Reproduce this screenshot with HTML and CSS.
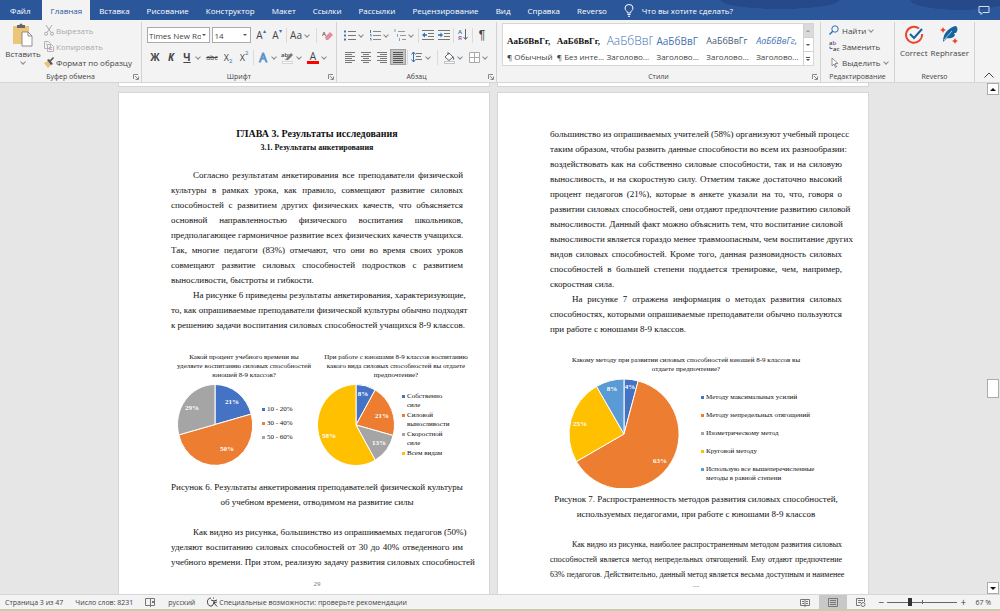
FILE: index.html
```html
<!DOCTYPE html>
<html lang="ru">
<head>
  <meta charset="UTF-8">
  <meta name="viewport" content="width=device-width, initial-scale=1.0">
  <title>Документ</title>
  <link rel="stylesheet" href="styles.css">
</head>
<body>
  <header class="tabs">
    <button class="tab file">Файл</button>
    <button class="tab active">Главная</button>
    <button class="tab">Вставка</button>
    <button class="tab">Рисование</button>
    <button class="tab">Конструктор</button>
    <button class="tab">Макет</button>
    <button class="tab">Ссылки</button>
    <button class="tab">Рассылки</button>
    <button class="tab">Рецензирование</button>
    <button class="tab">Вид</button>
    <button class="tab">Справка</button>
    <button class="tab">Reverso</button>
    <button class="tab tell-me">
      <svg width="10" height="13" viewBox="0 0 10 13" fill="none" stroke="#fff"><path d="M3.5 9C3.5 7 1 6.500 1 4a4 3.500 0 0 1 8 0c0 2.500-2.500 3-2.500 5zM3.500 10.500h3M4 12.300h2"/></svg>
      Что вы хотите сделать?
    </button>
    <button class="comment" aria-label="Примечания">
      <svg width="12" height="11" viewBox="0 0 12 11" fill="none" stroke="#d5dff0"><path d="M1 1.500h10v6H5L3 9.500v-2H1z"/></svg>
    </button>
  </header>

  <section class="ribbon">
    <div class="group clipboard">
      <div class="group-body">
        <button class="big-button paste">
          <svg width="22" height="24" viewBox="0 0 22 24"><rect x="1" y="3" width="16" height="18" fill="#ecc57c"/><path d="M5 5V2h2.500a1.500 1.500 0 0 1 3 0H13v3z" fill="#666"/><path d="M10 9h6l4 4v10H10z" fill="#fff" stroke="#777" stroke-width=".8"/><path d="M16 9v4h4" fill="none" stroke="#777" stroke-width=".8"/></svg>
          <span>Вставить</span>
          <i class="caret"></i>
        </button>
        <div class="stack">
          <button class="line-button disabled">
            <svg width="10" height="11" viewBox="0 0 10 11" fill="none" stroke="#aaa"><path d="M2 0l5 7.500M8 0L3 7.500"/><circle cx="2" cy="8.700" r="1.500"/><circle cx="8" cy="8.700" r="1.500"/></svg>
            Вырезать
          </button>
          <button class="line-button disabled">
            <svg width="10" height="11" viewBox="0 0 10 11" fill="#f3f3f3" stroke="#b9aeb9"><path d="M.500.500h4l2 2v5h-6zM3.500 3.500h4l2 2v5h-6zM5 6.500h3M5 8.500h3M2 3h1"/></svg>
            Копировать
          </button>
          <button class="line-button">
            <svg width="10" height="11" viewBox="0 0 10 11"><path d="M0 6l4-2 3 4-3 3z" fill="#ecc06f"/><path d="M3 3l2-1 4 5-2 1zM6 3l3-3 1 1-3 3.500z" fill="#555"/></svg>
            Формат по образцу
          </button>
        </div>
      </div>
      <div class="group-label">Буфер обмена<svg class="launcher" width="6" height="6" viewBox="0 0 6 6"><path d="M.5 5V.5H5M2 2l3 3M5.500 2.500v3h-3"/></svg></div>
    </div>

    <div class="group font">
      <div class="group-body rows">
        <div class="row">
          <label class="combo font-name"><select aria-label="Шрифт"><option>Times New Roman</option></select></label>
          <label class="combo font-size"><select aria-label="Размер шрифта"><option>14</option></select></label>
          <button class="tool grow">A<sup>▴</sup></button>
          <button class="tool shrink">A<sup>▾</sup></button>
          <i class="sep"></i>
          <button class="tool case">Aa</button><i class="caret"></i>
          <i class="sep wide"></i>
          <button class="tool" aria-label="Очистить формат"><svg width="12" height="12" viewBox="0 0 12 12"><text x="0" y="7" class="icon-text" fill="#555">A</text><path d="M3 8l5-5 3 3-5 5H4z" fill="#e78a9b"/></svg></button>
        </div>
        <div class="row">
          <button class="tool bold">Ж</button>
          <button class="tool bold italic">К</button>
          <button class="tool bold underline">Ч</button><i class="caret"></i>
          <button class="tool strike">abc</button>
          <button class="tool script">X<sub>2</sub></button>
          <button class="tool script">X<sup>2</sup></button>
          <i class="sep"></i>
          <button class="tool outline-letter">A</button><i class="caret"></i>
          <button class="tool" aria-label="Цвет выделения"><svg width="14" height="13" viewBox="0 0 14 13"><text x="0" y="6" class="icon-text" fill="#444">aby</text><path d="M5 8l5-6 2 2-5 5H4z" fill="#777"/><path d="M1.500 10.500h10v2h-10z" fill="#fff" stroke="#bbb" stroke-width=".6"/></svg></button><i class="caret"></i>
          <button class="tool font-color">A</button><i class="caret"></i>
        </div>
      </div>
      <div class="group-label">Шрифт<svg class="launcher" width="6" height="6" viewBox="0 0 6 6"><path d="M.5 5V.5H5M2 2l3 3M5.500 2.500v3h-3"/></svg></div>
    </div>

    <div class="group paragraph">
      <div class="group-body rows">
        <div class="row">
          <button class="tool" aria-label="Маркеры"><svg width="12" height="12" viewBox="0 0 12 12"><path d="M4 2.500h8M4 6.500h8M4 10.500h8" stroke="#777"/><path d="M0 1.500h2v2H0zM0 5.500h2v2H0zM0 9.500h2v2H0z" fill="#3c78b8"/></svg></button><i class="caret"></i>
          <button class="tool" aria-label="Нумерация"><svg width="12" height="12" viewBox="0 0 12 12"><path d="M4 2.500h8M4 6.500h8M4 10.500h8" stroke="#888"/><path d="M1.500 1v3M1 5.500h1v2M1 9.500h1v2" stroke="#3c78b8" fill="none"/></svg></button><i class="caret"></i>
          <button class="tool" aria-label="Многоуровневый список"><svg width="12" height="12" viewBox="0 0 12 12"><path d="M4 2.500h7M6 6.500h6M8 10.500h4" stroke="#999"/><path d="M1 0v3M3.500 5v3M5.500 9v3" stroke="#7ba3cf"/></svg></button><i class="caret"></i>
          <i class="sep"></i>
          <button class="tool" aria-label="Уменьшить отступ"><svg width="12" height="12" viewBox="0 0 12 12"><path d="M0 1.500h12M6 4.500h6M6 7.500h6M0 10.500h12" stroke="#777"/><path d="M0 6l3-2.500v1.800h2v1.500H3v1.700z" fill="#2f71b5"/></svg></button>
          <button class="tool" aria-label="Увеличить отступ"><svg width="12" height="12" viewBox="0 0 12 12"><path d="M0 1.500h12M6 4.500h6M6 7.500h6M0 10.500h12" stroke="#777"/><path d="M5 6L2.500 3.500v1.800H0v1.500h2.500v1.700z" fill="#2f71b5"/></svg></button>
          <i class="sep"></i>
          <button class="tool" aria-label="Сортировка"><svg width="12" height="14" viewBox="0 0 12 14"><text x="1" y="6" class="icon-text" fill="#2f71b5">А</text><text x="1" y="12" class="icon-text" fill="#8b4a9c">Я</text><path d="M8.500 1v10M6.500 9l2 2.500 2-2.500" stroke="#666" fill="none"/></svg></button>
          <i class="sep"></i>
          <button class="tool pilcrow">¶</button>
        </div>
        <div class="row">
          <button class="tool" aria-label="По левому краю"><svg width="10" height="12" viewBox="0 0 10 12" stroke="#777"><path d="M0 1.500h10M0 3.500h7M0 5.500h10M0 7.500h7M0 9.500h10M0 11.500h7"/></svg></button>
          <button class="tool" aria-label="По центру"><svg width="10" height="12" viewBox="0 0 10 12" stroke="#777"><path d="M0 1.500h10M2 3.500h6M0 5.500h10M2 7.500h6M0 9.500h10M2 11.500h6"/></svg></button>
          <button class="tool" aria-label="По правому краю"><svg width="10" height="12" viewBox="0 0 10 12" stroke="#777"><path d="M0 1.500h10M3 3.500h7M0 5.500h10M3 7.500h7M0 9.500h10M3 11.500h7"/></svg></button>
          <button class="tool selected" aria-label="По ширине"><svg width="10" height="12" viewBox="0 0 10 12" stroke="#555"><path d="M0 1.500h10M0 3.500h10M0 5.500h10M0 7.500h10M0 9.500h10M0 11.500h10"/></svg></button>
          <i class="sep"></i>
          <button class="tool" aria-label="Интервал"><svg width="12" height="12" viewBox="0 0 12 12"><path d="M5 2.500h6M5 5.500h5M5 8.500h6" stroke="#777"/><path d="M2.500 1v10M.500 3.500l2-2.500 2 2.500M.500 8.500l2 2.500 2-2.500" stroke="#2f71b5" fill="none"/></svg></button><i class="caret"></i>
          <i class="sep wide"></i>
          <button class="tool" aria-label="Заливка"><svg width="13" height="13" viewBox="0 0 13 13"><path d="M2 6l4-4 4 4-4 3.500zM5 4V1" fill="#fff" stroke="#666"/><path d="M10 5q2 2.500 1 4-1.500 0-1-4z" fill="#2f71b5"/><path d="M1.500 10.500h10v2h-10z" fill="#fff" stroke="#aaa" stroke-width=".7"/></svg></button><i class="caret"></i>
          <button class="tool" aria-label="Границы"><svg width="11" height="11" viewBox="0 0 11 11" fill="#fff" stroke="#aaa"><path d="M.500.500h10v10H.500zM5.500.500v10M.500 5.500h10"/></svg></button><i class="caret"></i>
        </div>
      </div>
      <div class="group-label">Абзац<svg class="launcher" width="6" height="6" viewBox="0 0 6 6"><path d="M.5 5V.5H5M2 2l3 3M5.500 2.500v3h-3"/></svg></div>
    </div>

    <div class="group styles">
      <div class="group-body">
        <div class="gallery">
          <button class="style"><b class="sample normal">АаБбВвГг,</b><span>¶ Обычный</span></button>
          <button class="style"><b class="sample normal">АаБбВвГг,</b><span>¶ Без инте...</span></button>
          <button class="style"><b class="sample h1">АаБбВвГ</b><span>Заголово...</span></button>
          <button class="style"><b class="sample h2">АаБбВвГ</b><span>Заголово...</span></button>
          <button class="style"><b class="sample h3">АаБбВвГг</b><span>Заголово...</span></button>
          <button class="style"><b class="sample h4">АаБбВвГг,</b><span>Заголово...</span></button>
          <div class="gallery-nav">
            <button class="off" aria-label="Вверх"><i class="arrow up"></i></button>
            <button aria-label="Вниз"><i class="arrow"></i></button>
            <button class="more" aria-label="Ещё"><i class="arrow"></i></button>
          </div>
        </div>
      </div>
      <div class="group-label">Стили<svg class="launcher" width="6" height="6" viewBox="0 0 6 6"><path d="M.5 5V.5H5M2 2l3 3M5.500 2.500v3h-3"/></svg></div>
    </div>

    <div class="group editing">
      <div class="group-body">
        <div class="stack">
          <button class="line-button">
            <svg width="11" height="11" viewBox="0 0 11 11" fill="none" stroke="#2f71b5"><circle cx="6" cy="4" r="3.200"/><path d="M3.700 6.300L.500 9.500" stroke-width="1.500"/></svg>
            Найти <i class="caret"></i>
          </button>
          <button class="line-button">
            <svg width="11" height="12" viewBox="0 0 11 12"><text x="0" y="5" class="icon-text" fill="#444">a<tspan fill="#8b4a9c">b</tspan></text><text x="4" y="11" class="icon-text" fill="#444">ac</text><path d="M1 6.500v2h2.500" fill="none" stroke="#2f71b5"/></svg>
            Заменить
          </button>
          <button class="line-button">
            <svg width="11" height="11" viewBox="0 0 11 11" fill="#fff" stroke="#777"><path d="M3 1v8l2-2 1.500 3.500 1-.500L6 6.500h3z" stroke-width=".8"/></svg>
            Выделить <i class="caret"></i>
          </button>
        </div>
      </div>
      <div class="group-label">Редактирование</div>
    </div>

    <div class="group reverso">
      <div class="group-body">
        <button class="big-button">
          <svg width="20" height="20" viewBox="0 0 20 20" fill="none" stroke-width="2"><path d="M15 3.500A8 8 0 1 0 18 9" stroke="#e8452c"/><path d="M6 9l4 4 8-9" stroke="#17639f"/></svg>
          <span>Correct</span>
        </button>
        <button class="big-button">
          <svg width="20" height="20" viewBox="0 0 20 20"><path d="M3 17Q3 9 8 5t8-4Q19 4 16 8h-2l1 2q-2 4-8 3z" fill="#17639f"/><path d="M4 15l8-9" stroke="#f3f3f3" stroke-width=".7"/><path d="M3 2l1 2 2 1-2 1-1 2-1-2-2-1 2-1zM15 13l1 2 2 1-2 1-1 2-1-2-2-1 2-1z" fill="#e8452c"/></svg>
          <span>Rephraser</span>
        </button>
      </div>
      <div class="group-label">Reverso</div>
    </div>
    <button class="collapse" aria-label="Свернуть ленту"><svg width="10" height="6" viewBox="0 0 10 6" fill="none" stroke="#444"><path d="M.500 5.500L5 1l4.500 4.500"/></svg></button>
  </section>

  <main class="workspace">
    <div class="canvas">
      <div class="previous-page"></div>
      <div class="previous-page"></div>

      <article class="page first">
        <h1>ГЛАВА 3. Результаты исследования</h1>
        <h2>3.1. Результаты анкетирования</h2>
        <p class="text">
          <span>Согласно результатам анкетирования все преподаватели физической</span>
          <span>культуры в рамках урока, как правило, совмещают развитие силовых</span>
          <span>способностей с развитием других физических качеств, что объясняется</span>
          <span>основной направленностью физического воспитания школьников,</span>
          <span>предполагающее гармоничное развитие всех физических качеств учащихся.</span>
          <span>Так, многие педагоги (83%) отмечают, что они во время своих уроков</span>
          <span>совмещают развитие силовых способностей подростков с развитием</span>
          <span>выносливости, быстроты и гибкости.</span>
        </p>
        <p class="text">
          <span>На рисунке 6 приведены результаты анкетирования, характеризующие,</span>
          <span>то, как опрашиваемые преподаватели физической культуры обычно подходят</span>
          <span>к решению задачи воспитания силовых способностей учащихся 8-9 классов.</span>
        </p>

        <div class="charts">
          <figure class="chart time">
            <figcaption>Какой процент учебного времени вы<br>уделяете воспитанию силовых способностей<br>юношей 8-9 классов?</figcaption>
            <div class="plot">
              <svg class="pie" width="76" height="81" viewBox="0 0 76 81">
                <path d="M38 40.500V.500A37.500 40 0 0 1 74.200 30.100z" fill="#4472c4"/>
                <path d="M38 40.500L74.200 30.100A37.500 40 0 1 1 1.800 50.900z" fill="#ed7d31"/>
                <path d="M38 40.500L1.800 50.900A37.500 40 0 0 1 38 .500z" fill="#a5a5a5"/>
                <text x="55" y="20">21%</text>
                <text x="15" y="26">29%</text>
                <text x="50" y="67">50%</text>
              </svg>
              <ul class="legend">
                <li class="blue">10 - 20%</li>
                <li class="orange">30 - 40%</li>
                <li class="gray">50 - 60%</li>
              </ul>
            </div>
          </figure>
          <figure class="chart kind">
            <figcaption>При работе с юношами 8-9 классов воспитанию<br>какого вида силовых способностей вы отдаете<br>предпочтение?</figcaption>
            <div class="plot">
              <svg class="pie" width="78" height="82" viewBox="0 0 78 82">
                <path d="M39 41V.500A38.500 40.500 0 0 1 58.200 5.900z" fill="#4472c4"/>
                <path d="M39 41L58.200 5.900A38.500 40.500 0 0 1 76.200 51.500z" fill="#ed7d31"/>
                <path d="M39 41L76.200 51.500A38.500 40.500 0 0 1 58.200 76.100z" fill="#a5a5a5"/>
                <path d="M39 41L58.200 76.100A38.500 40.500 0 1 1 39 .500z" fill="#ffc000"/>
                <text x="46" y="12">8%</text>
                <text x="65" y="34">21%</text>
                <text x="62" y="61">13%</text>
                <text x="12" y="54">58%</text>
              </svg>
              <ul class="legend">
                <li class="blue">Собственно<br>силе</li>
                <li class="orange">Силовой<br>выносливости</li>
                <li class="gray">Скоростной<br>силе</li>
                <li class="yellow">Всем видам</li>
              </ul>
            </div>
          </figure>
        </div>

        <p class="caption">Рисунок 6. Результаты анкетирования преподавателей физической культуры<br>об учебном времени, отводимом на развитие силы</p>
        <p class="text cut">
          <span>Как видно из рисунка, большинство из опрашиваемых педагогов (50%)</span>
          <span>уделяют воспитанию силовых способностей от 30 до 40% отведенного им</span>
          <span>учебного времени. При этом, реализую задачу развития силовых способностей</span>
        </p>
        <div class="page-number">29</div>
      </article>

      <article class="page second">
        <p class="text continued">
          <span>большинство из опрашиваемых учителей (58%) организуют учебный процесс</span>
          <span>таким образом, чтобы развить данные способности во всем их разнообразии:</span>
          <span>воздействовать как на собственно силовые способности, так и на силовую</span>
          <span>выносливость, и на скоростную силу. Отметим также достаточно высокий</span>
          <span>процент педагогов (21%), которые в анкете указали на то, что, говоря о</span>
          <span>развитии силовых способностей, они отдают предпочтение развитию силовой</span>
          <span>выносливости. Данный факт можно объяснить тем, что воспитание силовой</span>
          <span>выносливости является гораздо менее травмоопасным, чем воспитание других</span>
          <span>видов силовых способностей. Кроме того, данная разновидность силовых</span>
          <span>способностей в большей степени поддается тренировке, чем, например,</span>
          <span>скоростная сила.</span>
        </p>
        <p class="text">
          <span>На рисунке 7 отражена информация о методах развития силовых</span>
          <span>способностях, которыми опрашиваемые преподаватели обычно пользуются</span>
          <span>при работе с юношами 8-9 классов.</span>
        </p>

        <figure class="chart methods">
          <figcaption>Какому методу при развитии силовых способностей юношей 8-9 классов вы<br>отдаете предпочтение?</figcaption>
          <div class="plot">
            <svg class="pie" width="112" height="110" viewBox="0 0 112 110">
              <path d="M56 56V1A55 55 0 0 1 70.200 2.900z" fill="#4472c4"/>
              <path d="M56 56L70.200 2.900A55 55 0 1 1 8.400 83.500z" fill="#ed7d31"/>
              <path d="M56 56L8.400 83.500A55 55 0 0 1 28.500 8.400z" fill="#ffc000"/>
              <path d="M56 56L28.500 8.400A55 55 0 0 1 56 1z" fill="#5b9bd5"/>
              <text x="62" y="11">4%</text>
              <text x="44" y="13">8%</text>
              <text x="12" y="48">25%</text>
              <text x="92" y="85">63%</text>
            </svg>
            <ul class="legend">
              <li class="blue">Методу максимальных усилий</li>
              <li class="orange">Методу непредельных отягощений</li>
              <li class="gray">Изометрическому метод</li>
              <li class="yellow">Круговой методу</li>
              <li class="sky">Использую все вышеперечисленные<br>методы в равной степени</li>
            </ul>
          </div>
        </figure>

        <p class="caption">Рисунок 7. Распространенность методов развития силовых способностей,<br>используемых педагогами, при работе с юношами 8-9 классов</p>
        <p class="text cut dense">
          <span>Как видно из рисунка, наиболее распространенным методом развития силовых</span>
          <span>способностей является метод непредельных отягощений. Ему отдают предпочтение</span>
          <span>63% педагогов. Действительно, данный метод является весьма доступным и наименее</span>
        </p>
        <div class="page-number clipped">30</div>
      </article>
    </div>
    <div class="scrollbar">
      <button aria-label="Вверх"><i class="arrow up"></i></button>
      <div class="track"><div class="thumb"></div></div>
      <button aria-label="Вниз"><i class="arrow"></i></button>
    </div>
  </main>

  <footer class="status">
    <span>Страница 3 из 47</span>
    <span>Число слов: 8231</span>
    <svg width="11" height="9" viewBox="0 0 11 9" fill="none" stroke="#777"><path d="M.500.500h5v7h-5zM5.500.500h4v7h-4M5.500 0v9M7 3l2 2M9 3L7 5"/></svg>
    <span>русский</span>
    <span class="access"><svg width="11" height="10" viewBox="0 0 11 10" fill="none" stroke="#444"><path d="M4 1A4 4 0 0 0 5 9M6 1l1 0"/><path d="M4 3l3 1 3-1M7 4v2L5 9M7 6l3 3.500M6 6l4-1"/></svg>Специальные возможности: проверьте рекомендации</span>
    <div class="status-right">
      <button class="view" aria-label="Режим чтения"><svg width="10" height="9" viewBox="0 0 10 9" fill="none" stroke="#777"><path d="M.500 1.500h9v6h-9zM5 1v8M2 3.500h2M2 5.500h2M6 3.500h2M6 5.500h2"/></svg></button>
      <button class="view current" aria-label="Разметка страницы"><svg width="10" height="9" viewBox="0 0 10 9" fill="none" stroke="#777"><path d="M.500.500h9v8h-9zM2 2.500h6M2 4.500h6M2 6.500h6"/></svg></button>
      <button class="view" aria-label="Веб-документ"><svg width="10" height="9" viewBox="0 0 10 9" fill="none" stroke="#777"><path d="M4 7.500H.500v-7h8V4M2 2.500h5M2 4.500h3"/><circle cx="7" cy="6.500" r="2"/></svg></button>
      <button class="zoom-step">−</button>
      <input class="zoom" type="range" min="0" max="100" value="31" aria-label="Масштаб">
      <button class="zoom-step">+</button>
      <span class="percent">67 %</span>
    </div>
  </footer>
</body>
</html>
```
FILE: styles.css
```css
* {
  box-sizing: border-box;
}
body {
  margin: 0;
  height: 100vh;
  display: flex;
  flex-direction: column;
  overflow: hidden;
  background: #e6e6e6;
  color: #444;
  font-family: "Open Sans", "Noto Sans", sans-serif;
  font-size: 8px;
}
button {
  padding: 0;
  border: 0;
  background: none;
  color: inherit;
  font: inherit;
  white-space: nowrap;
}
svg {
  display: block;
  flex: none;
}
.icon-text {
  font-size: 6px;
  font-weight: 600;
}

/* tabs */
.tabs {
  flex: none;
  display: flex;
  gap: 1px;
  height: 20px;
  color: #fff;
  background:
    radial-gradient(ellipse 60px 9px at 78% 0, #26498a 98%, transparent),
    radial-gradient(ellipse 50px 10px at 96% 0, #26498a 98%, transparent),
    #2b579a;
}
.tab {
  padding: 0 8px;
}
.tab.file {
  padding: 0 11px 0 10px;
}
.tab.active {
  background: #f3f3f3;
  color: #2b579a;
}
.tell-me {
  display: flex;
  align-items: center;
  gap: 8px;
}
.comment {
  margin-left: auto;
  padding-right: 10px;
}

/* ribbon */
.ribbon {
  flex: none;
  display: flex;
  height: 63px;
  background: #f3f3f3;
  border-bottom: 1px solid #d6d6d6;
}
.group {
  flex: none;
  display: flex;
  flex-direction: column;
  margin-top: 2px;
  border-right: 1px solid #d2d2d2;
}
.group-body {
  flex: 1;
  display: flex;
  min-width: 0;
}
.group-label {
  position: relative;
  height: 10px;
  line-height: 9px;
  text-align: center;
  font-size: 7px;
}
.launcher {
  position: absolute;
  right: 2px;
  top: 2px;
  fill: none;
  stroke: #888;
}
.clipboard {
  width: 142px;
}
.font {
  width: 195px;
}
.paragraph {
  width: 160px;
}
.group.styles {
  flex: 1;
  min-width: 0;
}
.editing {
  width: 74px;
}
.reverso {
  width: 80px;
}
.caret {
  flex: none;
  display: inline-block;
  width: 6px;
  height: 5px;
}
.caret::before {
  content: "";
  display: block;
  width: 3px;
  height: 3px;
  margin: 0 1px;
  border-right: 1px solid #888;
  border-bottom: 1px solid #888;
  transform: rotate(45deg);
}
.big-button {
  display: flex;
  flex-direction: column;
  align-items: center;
  gap: 3px;
  padding-top: 3px;
  line-height: 11px;
}
.paste {
  width: 42px;
  margin-left: 2px;
  padding-top: 1px;
  gap: 1px;
}
.stack {
  display: flex;
  flex-direction: column;
}
.line-button {
  display: flex;
  align-items: center;
  gap: 2px;
  height: 16px;
}
.disabled {
  color: #aaa;
}

.rows {
  flex-direction: column;
  gap: 6px;
  padding: 5px 0 0 5px;
}
.row {
  display: flex;
  align-items: center;
  height: 16px;
}
.tool {
  flex: none;
  display: flex;
  justify-content: center;
  align-items: center;
  width: 16px;
  height: 16px;
  font-size: 10px;
}
.row .caret {
  margin-right: 3px;
}
.sep {
  width: 1px;
  height: 15px;
  margin: 0 1px;
  background: #dadada;
}
.sep.wide {
  margin: 0 3px;
}
.combo {
  position: relative;
  height: 16px;
  margin-right: 2px;
  background: #fff;
  border: 1px solid #ababab;
}
.combo select {
  display: block;
  width: 100%;
  height: 14px;
  padding: 0 8px 0 1px;
  border: 0;
  background: none;
  appearance: none;
  color: #444;
  font: inherit;
}
.combo::after {
  content: "";
  position: absolute;
  right: 3px;
  top: 6px;
  border: 2px solid transparent;
  border-top-color: #555;
}
.font-name {
  width: 64px;
}
.font-size {
  width: 39px;
}
.tool sup,
.tool sub {
  align-self: flex-start;
  color: #2f71b5;
  font-size: 6px;
  line-height: 8px;
}
.tool sub {
  align-self: flex-end;
}
.bold {
  font-weight: 700;
}
.italic {
  font-style: italic;
}
.underline {
  text-decoration: underline;
}
.strike {
  font-size: 7px;
  text-decoration: line-through;
}
.script {
  font-size: 9px;
}
.outline-letter {
  color: #fff;
  font-size: 12px;
  -webkit-text-stroke: 1px #5b93cf;
}
.font-color {
  border-bottom: 3px solid #f00;
  width: 12px;
  height: 13px;
  margin: 0 2px;
}
.pilcrow {
  font-family: "Liberation Sans", sans-serif;
  font-size: 12px;
}
.selected {
  background: #c5c5c5;
  border: 1px solid #a0a0a0;
}

.gallery {
  flex: 1;
  min-width: 0;
  display: flex;
  height: 43px;
  margin: 1px 6px 0 5px;
  padding-left: 1px;
  background: #fff;
  border: 1px solid #d6d6d6;
}
.style {
  flex: 1;
  min-width: 0;
  overflow: hidden;
  padding: 5px 0 0 3px;
  text-align: left;
}
.style span,
.sample {
  display: block;
}
.style span {
  line-height: 12px;
}
.sample {
  height: 20px;
  line-height: 20px;
  font-weight: 400;
}
.sample.normal {
  color: #111;
  font: bold 9px/20px "Liberation Serif", serif;
}
.sample.h1 {
  color: #4472b4;
  font-size: 12px;
  font-weight: 300;
}
.sample.h2 {
  color: #4472b4;
  font-size: 10px;
}
.sample.h3 {
  color: #44597a;
  font-size: 9px;
}
.sample.h4 {
  color: #4472b4;
  font-size: 9px;
  font-style: italic;
}
.gallery-nav {
  flex: none;
  width: 10px;
  display: flex;
  flex-direction: column;
}
.gallery-nav button {
  flex: 1;
  display: flex;
  justify-content: center;
  align-items: center;
  border-left: 1px solid #d0d0d0;
  border-bottom: 1px solid #d0d0d0;
}
.gallery-nav .off {
  background: #dadada;
}
.gallery-nav .more {
  flex-direction: column;
  gap: 1px;
  border-bottom: 0;
}
.more::before {
  content: "";
  width: 4px;
  height: 1px;
  background: #555;
}
.arrow {
  width: 0;
  border: 2px solid transparent;
  border-top-color: #555;
  border-bottom: 0;
}
.arrow.up {
  border-top: 0;
  border-bottom: 2px solid #999;
}
.editing .stack {
  padding-left: 8px;
}
.reverso .group-body {
  justify-content: center;
  gap: 3px;
}
.reverso .big-button {
  gap: 2px;
}
.collapse {
  padding: 47px 6px 0 9px;
}

/* document */
.workspace {
  flex: 1;
  min-height: 0;
  display: flex;
}
.canvas {
  flex: 1;
  display: grid;
  grid-template-columns: 370px 370px;
  grid-template-rows: 3px 1fr;
  gap: 7px 9px;
  justify-content: center;
  overflow: hidden;
}
.previous-page,
.page {
  background: #fff;
  box-shadow: 0 0 0 1px #d6d6d6;
}
.page {
  padding: 34px 26px 0 52px;
  color: #111;
  font-family: "Liberation Serif", "Times New Roman", serif;
  font-size: 9px;
  line-height: 15px;
}
.page h1,
.page h2 {
  margin: 0;
  text-align: center;
  font-size: 10px;
  line-height: 14px;
}
.page h2 {
  margin-bottom: 13px;
  font-size: 8px;
}
.page p {
  margin: 0;
}
.text span {
  display: block;
  white-space: nowrap;
  text-align-last: justify;
}
.text span:first-child {
  padding-left: 22px;
}
.text.continued span:first-child {
  padding-left: 0;
}
.text:not(.cut) span:last-child {
  text-align-last: left;
}
.caption {
  text-align: center;
  white-space: nowrap;
}
.page .cut {
  margin-top: 15px;
}
.dense {
  font-size: 8px;
}
.page-number {
  margin-top: 9px;
  height: 10px;
  line-height: 10px;
  text-align: center;
  font-size: 7px;
  color: #777;
}
.page-number.clipped {
  margin-top: 1px;
  height: 4px;
  overflow: hidden;
}

/* charts */
.charts {
  display: flex;
  margin: 20px -12px 14px 0;
}
.chart {
  margin: 0;
  font-size: 7px;
  line-height: 9px;
}
.chart figcaption {
  text-align: center;
  white-space: nowrap;
}
.plot {
  display: flex;
  align-items: center;
  margin-top: 4px;
}
.time {
  width: 146px;
}
.time .plot {
  padding-left: 6px;
}
.kind {
  flex: 1;
}
.page .methods {
  width: 272px;
  margin: 19px 0 4px;
}
.methods .plot {
  padding-left: 18px;
}
.pie path {
  stroke: #fff;
  stroke-linejoin: round;
}
.pie text {
  fill: #fff;
  font-weight: 700;
  text-anchor: middle;
}
.legend {
  display: flex;
  flex-direction: column;
  gap: 1px;
  margin: 0 0 0 7px;
  padding: 0;
  list-style: none;
  white-space: nowrap;
}
.legend li {
  position: relative;
  padding-left: 5px;
}
.legend li::before {
  content: "";
  position: absolute;
  left: 0;
  top: 3px;
  width: 3px;
  height: 3px;
  background: var(--key);
}
.time .legend {
  gap: 5px;
  margin-left: 9px;
  padding-bottom: 3px;
}
.methods .legend {
  gap: 9px;
  margin-left: 21px;
  padding-top: 10px;
}
.blue {
  --key: #4472c4;
}
.orange {
  --key: #ed7d31;
}
.gray {
  --key: #a5a5a5;
}
.yellow {
  --key: #ffc000;
}
.sky {
  --key: #5b9bd5;
}

/* scrollbar */
.scrollbar {
  width: 13px;
  display: flex;
  flex-direction: column;
  padding-right: 1px;
}
.scrollbar button {
  height: 12px;
  display: flex;
  justify-content: center;
  align-items: center;
  background: #fff;
  border: 1px solid #ababab;
}
.scrollbar .arrow {
  border-width: 3px;
  border-bottom-width: 0;
  border-top-color: #111;
}
.scrollbar .arrow.up {
  border-width: 0 3px 3px;
  border-bottom-color: #111;
}
.track {
  flex: 1;
  padding-top: 284px;
}
.thumb {
  height: 19px;
  background: #fff;
  border: 1px solid #ababab;
}

/* status bar */
.status {
  flex: none;
  display: flex;
  align-items: center;
  gap: 12px;
  height: 17px;
  padding-left: 5px;
  background: #f3f3f3;
  border-top: 1px solid #d6d6d6;
  border-bottom: 2px solid #c8cda9;
  font-size: 7px;
}
.access {
  display: flex;
  align-items: center;
  gap: 1px;
}
.status-right {
  display: flex;
  align-items: center;
  align-self: stretch;
  margin-left: auto;
  padding-right: 9px;
}
.view {
  display: flex;
  justify-content: center;
  align-items: center;
  width: 28px;
  height: 14px;
}
.view.current {
  background: #c8c8c8;
}
.zoom-step {
  width: 12px;
  font-size: 10px;
}
.zoom {
  width: 70px;
  height: 10px;
  margin: 0;
  appearance: none;
  background:
    linear-gradient(#666, #666) center / 1px 4px no-repeat,
    linear-gradient(#666, #666) center / 100% 1px no-repeat;
}
.zoom::-webkit-slider-thumb {
  appearance: none;
  width: 4px;
  height: 8px;
  background: #333;
}
.percent {
  margin-left: 6px;
}
```
